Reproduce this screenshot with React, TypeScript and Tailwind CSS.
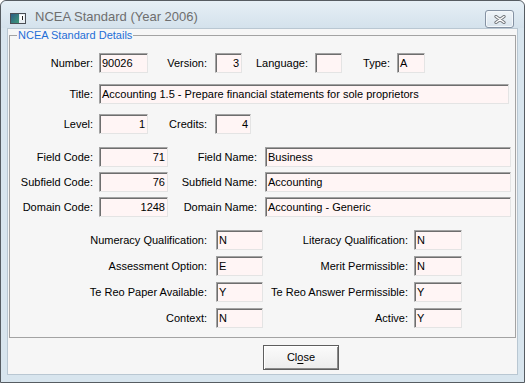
import { ReactNode } from "react";
import clsx from "clsx";

function Label({ children, className }: { children: ReactNode; className: string }) {
  return <div className={clsx("shrink-0 text-right whitespace-nowrap", className)}>{children}</div>;
}

function Field({ value = "", className, right }: { value?: string; className: string; right?: boolean }) {
  return (
    <div
      className={clsx(
        "flex h-[20px] shrink-0 items-center overflow-hidden whitespace-nowrap border border-t-[#a2a2a2] border-l-[#a2a2a2] border-b-[#e4e4e4] border-r-[#e4e4e4] bg-[#fff5f5] shadow-[inset_1px_1px_0_#6e6e6e]",
        right ? "justify-end pr-[2px]" : "pl-[2px]",
        className
      )}
    >
      {value}
    </div>
  );
}

function WindowIcon() {
  return (
    <svg width="16" height="11" viewBox="0 0 16 11" className="mt-[12px] ml-[9px] shrink-0">
      <defs>
        <linearGradient id="ic" x1="0" y1="0" x2="1" y2="1">
          <stop offset="0" stopColor="#2c5d86" />
          <stop offset="1" stopColor="#3f9a78" />
        </linearGradient>
      </defs>
      <rect x="0.5" y="0.5" width="15" height="10" fill="#e8eef2" stroke="#4a4f55" />
      <rect x="1" y="1" width="8" height="9" fill="url(#ic)" />
      <rect x="10" y="2" width="4" height="5" fill="#ffffff" />
      <rect x="12" y="3" width="1" height="4" fill="#222" />
    </svg>
  );
}

function CloseX() {
  return (
    <div className="mt-[9px] mr-[10px] ml-auto flex h-[18px] w-[29px] items-center justify-center rounded-[3px] border border-[#8592a3] bg-gradient-to-b from-[#f1f5f9] to-[#d9e4ed] shadow-[inset_0_0_0_1px_#f4f8fb]">
      <svg width="12" height="9" viewBox="0 0 12 9">
        <path d="M2 1.5 L10 7.5 M10 1.5 L2 7.5" stroke="#6f7378" strokeWidth="3.2" strokeLinecap="round" />
        <path d="M2 1.5 L10 7.5 M10 1.5 L2 7.5" stroke="#ffffff" strokeWidth="1.4" strokeLinecap="round" />
      </svg>
    </div>
  );
}

export default function App() {
  return (
    <div className="flex h-[383px] w-[525px] flex-col rounded-t-[6px] border border-[#565c62] bg-[#d8e5ee] font-['Liberation_Sans',Arial,sans-serif] text-[11px] text-black">
      {/* title bar */}
      <div className="flex h-[27px] shrink-0 items-start rounded-t-[6px] bg-gradient-to-b from-[#e6eff6] to-[#d4e2ec]">
        <WindowIcon />
        <div className="mt-[8px] ml-[9px] text-[13px] leading-[16px] text-[#6e6e6e]">NCEA Standard (Year 2006)</div>
        <CloseX />
      </div>

      {/* client area */}
      <div className="mx-[6px] mb-[7px] flex flex-1 flex-col border border-[#b9c7d2] bg-[#f6f6f6]">
        <div className="relative mx-[1px] mt-[6px] border border-[#a3a3a3] pt-[17px] pb-[9px]">
          <span className="absolute -top-[7px] left-[7px] bg-[#f6f6f6] px-[1px] leading-[13px] text-[#1f6ed6]">
            NCEA Standard Details
          </span>

          <div className="flex items-center">
            <Label className="w-[89px] pr-[6px]">Number:</Label>
            <Field className="w-[49px]" value="90026" />
            <Label className="w-[67px] pr-[8px]">Version:</Label>
            <Field className="w-[27px]" value="3" right />
            <Label className="w-[73px] pr-[7px]">Language:</Label>
            <Field className="w-[27px]" />
            <Label className="w-[55px] pr-[7px]">Type:</Label>
            <Field className="w-[28px]" value="A" />
          </div>

          <div className="mt-[11px] flex items-center">
            <Label className="w-[89px] pr-[6px]">Title:</Label>
            <Field className="w-[410px]" value="Accounting 1.5 - Prepare financial statements for sole proprietors" />
          </div>

          <div className="mt-[10px] flex items-center">
            <Label className="w-[89px] pr-[6px]">Level:</Label>
            <Field className="w-[49px]" value="1" right />
            <Label className="w-[67px] pr-[8px]">Credits:</Label>
            <Field className="w-[36px]" value="4" right />
          </div>

          <div className="mt-[13px] flex flex-col gap-[5px]">
            {[
              ["Field Code:", "71", "Field Name:", "Business"],
              ["Subfield Code:", "76", "Subfield Name:", "Accounting"],
              ["Domain Code:", "1248", "Domain Name:", "Accounting - Generic"],
            ].map(([l1, v1, l2, v2]) => (
              <div key={l1} className="flex items-center">
                <Label className="w-[89px] pr-[6px]">{l1}</Label>
                <Field className="w-[69px]" value={v1} right />
                <Label className="w-[97px] pr-[8px]">{l2}</Label>
                <Field className="w-[246px]" value={v2} />
              </div>
            ))}
          </div>

          <div className="mt-[13px] flex flex-col gap-[6px]">
            {[
              ["Numeracy Qualification:", "N", "Literacy Qualification:", "N"],
              ["Assessment Option:", "E", "Merit Permissible:", "N"],
              ["Te Reo Paper Available:", "Y", "Te Reo Answer Permissible:", "Y"],
              ["Context:", "N", "Active:", "Y"],
            ].map(([l1, v1, l2, v2]) => (
              <div key={l1} className="flex items-center">
                <Label className="w-[206px] pr-[9px]">{l1}</Label>
                <Field className="w-[47px]" value={v1} />
                <Label className="w-[151px] pr-[6px]">{l2}</Label>
                <Field className="w-[48px]" value={v2} />
              </div>
            ))}
          </div>
        </div>

        <button className="mt-[7px] ml-[255px] flex h-[25px] w-[76px] items-center justify-center border border-[#5e5e5e] bg-gradient-to-b from-[#fbfbfb] to-[#ececec] shadow-[inset_1px_1px_0_#ffffff,inset_-1px_-1px_0_#8a8a8a] text-[11px]">
          <span>
            Cl<span className="underline underline-offset-[2px]">o</span>se
          </span>
        </button>
      </div>
    </div>
  );
}
